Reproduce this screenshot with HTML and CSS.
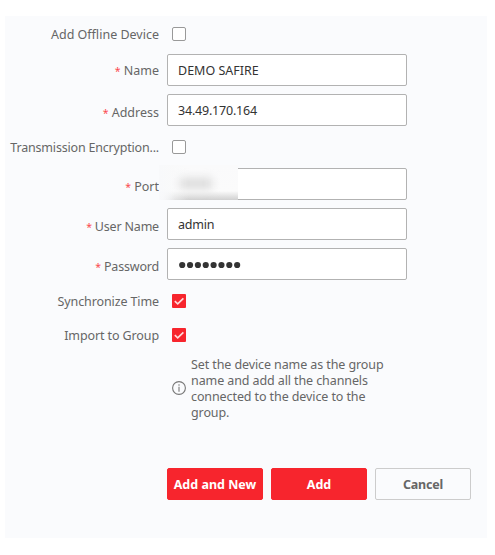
FILE: index.html
```html
<!DOCTYPE html>
<html lang="en">
<head>
<meta charset="utf-8">
<title>Add Device</title>
<link rel="stylesheet" href="styles.css">
</head>
<body>
<form class="panel">
  <div class="row row-first"><label class="label">Add Offline Device</label><span class="check"></span></div>
  <div class="row field"><label class="label label-name"><i>*</i> Name</label><div class="input name">DEMO SAFIRE</div></div>
  <div class="row field"><label class="label label-low"><i>*</i> Address</label><div class="input ip">34.49.170.164</div></div>
  <div class="row row-encryption"><label class="label encryption">Transmission Encryption...</label><span class="check"></span></div>
  <div class="row field"><label class="label label-low"><i>*</i> Port</label><div class="input"><div class="redacted"><span class="smudge"></span></div></div></div>
  <div class="row field"><label class="label label-low encryption"><i>*</i> User Name</label><div class="input user">admin</div></div>
  <div class="row field"><label class="label label-low encryption"><i>*</i> Password</label><div class="input"><svg class="dots" viewBox="0 0 62 8"><circle cx="3.2" cy="4" r="3.1"/><circle cx="11.05" cy="4" r="3.1"/><circle cx="18.9" cy="4" r="3.1"/><circle cx="26.75" cy="4" r="3.1"/><circle cx="34.6" cy="4" r="3.1"/><circle cx="42.45" cy="4" r="3.1"/><circle cx="50.3" cy="4" r="3.1"/><circle cx="58.15" cy="4" r="3.1"/></svg></div></div>
  <div class="row row-sync"><label class="label tight">Synchronize Time</label><span class="check checked"><svg viewBox="0 0 14 14"><path d="M2.8 7.2 5.7 9.8 11.4 4.4"/></svg></span></div>
  <div class="row row-import"><label class="label tight">Import to Group</label><span class="check checked"><svg viewBox="0 0 14 14"><path d="M2.8 7.2 5.7 9.8 11.4 4.4"/></svg></span></div>
  <div class="info">
    <svg class="info-icon" viewBox="0 0 14 14"><circle cx="7" cy="7" r="6.4"/><path d="M7 3.3v1.4M7 5.7v5"/></svg>
    <p>Set the device name as the group name and add all the channels connected to the device to the group.</p>
  </div>
  <div class="actions">
    <button type="button" class="btn primary">Add and New</button>
    <button type="button" class="btn primary">Add</button>
    <button type="button" class="btn cancel">Cancel</button>
  </div>
</form>
</body>
</html>
```
FILE: styles.css
```css
* { box-sizing: border-box; }
body { margin: 0; background: #fff; font: 12.5px/16px "Noto Sans", sans-serif; color: #666; }
.panel { width: 482px; height: 522px; margin: 16px 0 0 5px; background: #fafbfd; display: flow-root; }
.row { display: flex; align-items: center; height: 14px; }
.row-first { margin: 11px 0 13px; }
.field { height: 32px; margin-bottom: 8px; }
.row-encryption { margin: 14px 0; }
.row-sync { margin-top: 14px; }
.row-import { margin-top: 20px; }
.label { width: 154px; padding-top: 2px; text-align: right; white-space: nowrap; flex: none; }
.label i { color: #fa4a50; font-style: normal; font-size: 10.5px; }
.label-name { padding-top: 1px; }
.label-low { padding-top: 5px; }
.encryption { letter-spacing: -0.19px; }
.tight { letter-spacing: -0.11px; }
.check { width: 14px; height: 14px; margin-left: 13px; border: 1px solid #999; border-radius: 2px; background: #fff; }
.checked { border: 0; border-radius: 1px; background: #f7252d; }
.checked svg { display: block; width: 14px; height: 14px; fill: none; stroke: #ffdada; stroke-width: 1.7; }
.input { position: relative; width: 240px; height: 32px; margin-left: 8px; padding: 0 10px; border: 1px solid #b2b2b2; border-radius: 2px; background: #fff; color: #333; line-height: 31px; }
.ip { letter-spacing: -0.2px; }
.user { letter-spacing: -0.2px; }
.redacted { position: absolute; left: -9px; top: -4px; width: 79px; height: 35px; overflow: hidden; background: linear-gradient(90deg, #f8f9fa, rgba(248,249,250,0) 30px), linear-gradient(#fafafb 0, #fbfbfb 26px, #d0d0d0 35px); }
.redacted::after { content: ""; position: absolute; left: 0; top: 0; width: 16px; height: 35px; background: linear-gradient(90deg, #f8f9fb, rgba(248,249,251,0)); }
.smudge { position: absolute; left: 21px; top: 13px; width: 32px; height: 11px; background: #dcdcdc; filter: blur(4px); }
.dots { display: block; width: 62px; height: 8px; margin: 12px 0 0 1px; fill: #333; }
.info { display: flex; align-items: center; height: 64px; margin: 14px 0 0 167px; }
.info-icon { flex: none; width: 14px; height: 14px; margin-right: 5px; fill: none; stroke: #777; stroke-width: 1.1; }
.info p { width: 200px; margin: 2px 0 0; letter-spacing: -0.1px; }
.actions { display: flex; gap: 8px; margin: 48px 0 0 162px; }
.btn { width: 96px; height: 32px; padding: 1px 0 0; border: 1px solid #ccc; border-radius: 2px; background: #fafbfd; color: #666; font: bold 12.5px/30px "Noto Sans", sans-serif; white-space: nowrap; }
.primary { border-color: #f7252d; background: #f7252d; color: #fff; }
.cancel { letter-spacing: -0.2px; }
```
